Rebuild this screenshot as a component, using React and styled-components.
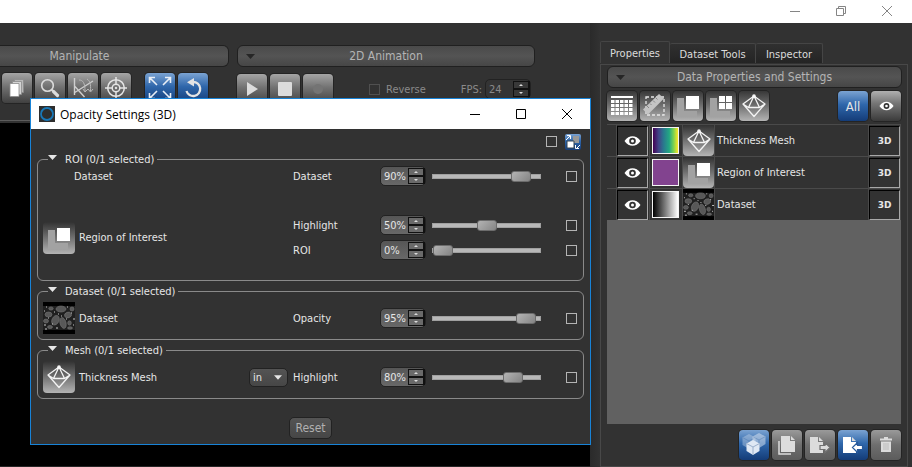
import React from 'react';
import styled, { createGlobalStyle, css } from 'styled-components';

const Global = createGlobalStyle`
  * { box-sizing: border-box; }
  html, body { margin: 0; background: #323232; }
  body, button, input, select {
    font-family: "DejaVu Sans Condensed", "DejaVu Sans", sans-serif;
    font-size: 11px;
    color: #e6e6e6;
  }
  button { padding: 0; border: 0; cursor: default; }
`;

const Shell = styled.div`
  height: 100vh;
  display: flex;
  flex-direction: column;
  overflow: hidden;
  background: #323232;
`;
const MainTitle = styled.header`
  flex: none;
  height: 23px;
  background: #fff;
  display: flex;
  justify-content: flex-end;
  align-items: center;
  gap: 30px;
  padding: 0 17px 2px 0;
`;
const WinButton = styled.button`
  width: 16px;
  height: 16px;
  background: none;
  display: grid;
  place-items: center;
  color: ${(p) => (p.$dim ? '#858585' : '#000')};
`;
const Columns = styled.div`
  flex: 1;
  min-height: 0;
  display: flex;
`;
const Workspace = styled.main`
  flex: 1;
  min-width: 0;
  display: flex;
  flex-direction: column;
`;
const Toolbar = styled.div`
  display: flex;
  gap: 8px;
  padding: 22px 0 16px;
  border-bottom: 1px solid #5c5c5c;
  margin-bottom: 2px;
`;
const Group = styled.section`
  flex: ${(p) => p.$size};
`;
const Bar = styled.h2`
  margin: 0;
  height: 22px;
  display: flex;
  align-items: center;
  justify-content: center;
  font-size: 12px;
  font-weight: 400;
  color: #b4b4b4;
  background: linear-gradient(#4a4a4a, #545454 50%, #464646);
  border: 1px solid #202020;
  border-radius: 6px;
  ${(p) => p.$clipped && css`
    padding-right: 69px;
    border-left: 0;
    border-radius: 0 6px 6px 0;
  `}
`;
const BarToggle = styled.button`
  width: 24px;
  height: 20px;
  background: none;
  display: grid;
  place-items: center;
  margin-right: -24px;
`;
const BarText = styled.span`
  flex: 1;
  text-align: center;
`;
const Tools = styled.div`
  display: flex;
  align-items: center;
  gap: 3px;
  padding: ${(p) => p.$pad || '0'};
`;
const Spacer = styled.span`
  width: ${(p) => (p.$w ? p.$w + 'px' : 'auto')};
  flex: ${(p) => (p.$w ? 'none' : '1')};
`;
const fills = {
  grey: 'linear-gradient(#a5a5a5, #727272 45%, #404040)',
  rise: 'linear-gradient(#383838, #6b6b6b 45%, #b4b4b4)',
  flat: 'linear-gradient(#9a9a9a, #6e6e6e 50%, #5c5c5c)',
  eye: 'linear-gradient(#b0b0b0, #777 40%, #3a3a3a)',
  blue: 'linear-gradient(#7ba3d2, #2f67ab 45%, #143c78)',
};
const IconButton = styled.button`
  width: 30px;
  height: 30px;
  flex: none;
  border-radius: 4px;
  background: ${(p) => fills[p.$fill]};
  box-shadow: 0 0 0 1px #242424;
  display: grid;
  place-items: center;
  font-size: 13px;
`;
const MutedLabel = styled.label`
  display: flex;
  align-items: center;
  gap: 6px;
  color: #8a8a8a;
`;
const Check = styled.input.attrs({ type: 'checkbox' })`
  appearance: none;
  width: 11px;
  height: 11px;
  margin: 0;
  border: 1px solid ${(p) => (p.$dim ? '#505050' : '#b4b4b4')};
  &:checked { background: #b4b4b4; }
`;
const Canvas = styled.div`
  flex: 1;
  background: #000;
  border-bottom: 1px solid #262626;
`;

const SpinBox = styled.span`
  display: flex;
  align-items: center;
  width: 46px;
  height: 20px;
  border: 1px solid #222;
  border-radius: 5px;
  background: ${(p) => (p.$dim ? '#343434' : 'linear-gradient(#565656, #686868)')};
`;
const SpinInput = styled.input`
  flex: 1;
  min-width: 0;
  width: 0;
  height: 18px;
  padding: 1px 0 0 3px;
  border: 0;
  background: none;
  outline: none;
  color: ${(p) => (p.$dim ? '#8a8a8a' : '#e6e6e6')};
`;
const SpinButtons = styled.span`
  display: flex;
  flex-direction: column;
  width: 17px;
`;
const SpinButton = styled.button`
  height: 8px;
  display: grid;
  place-items: center;
  border: 1px solid #111;
  border-right-width: 2px;
  background: ${(p) => (p.$dim ? '#383838' : '#6a6a6a')};
`;

const Side = styled.aside`
  width: 322px;
  flex: none;
  display: flex;
  flex-direction: column;
  padding: 18px 4px 0 10px;
  background: linear-gradient(90deg, #2a2a2a, #323232 10px);
`;
const Tabs = styled.div`
  display: flex;
  align-items: flex-end;
  height: 22px;
`;
const Tab = styled.button`
  height: ${(p) => (p.$on ? 22 : 20)}px;
  width: ${(p) => p.$w}px;
  padding-top: ${(p) => (p.$on ? 1 : 2)}px;
  border: 1px solid #454545;
  border-width: 1px 1px 0 ${(p) => (p.$on ? 1 : 0)}px;
  border-radius: 2px 2px 0 0;
  background: ${(p) => (p.$on ? '#323232' : 'linear-gradient(#303030, #242424)')};
  color: #dcdcdc;
`;
const SidePanel = styled.div`
  flex: 1;
  min-height: 0;
  display: flex;
  flex-direction: column;
  margin-top: 1px;
  padding: 1px 5px 6px 6px;
  border: 1px solid #484848;
  gap: 3px;
`;
const List = styled.div`
  flex: 1;
  background: #616161;
  margin: 0 1px 3px 0;
`;
const Table = styled.table`
  width: 100%;
  table-layout: fixed;
  border-collapse: separate;
  border-spacing: 0;
  background: #323232;
`;
const Cell = styled.td`
  width: ${(p) => (p.$w ? p.$w + 'px' : 'auto')};
  height: 32px;
  padding: ${(p) => p.$pad || '0'};
  border-top: 1px solid #4a4a4a;
  border-right: 1px solid #4a4a4a;
  vertical-align: middle;
  svg { display: block; }
`;
const CellButton = styled.button`
  width: 31px;
  height: 30px;
  display: grid;
  place-items: center;
  background: #323232;
  border: 1px solid #000;
  border-right-color: #a8a8a8;
  border-bottom-color: #a8a8a8;
  font: bold 9px "DejaVu Sans", sans-serif;
  color: #e6e6e6;
`;
const Swatch = styled.span`
  display: block;
  width: 27px;
  height: 27px;
  border: 1px solid #f4f4f4;
  background: ${(p) => p.$fill};
`;
const Tile = styled.span`
  display: grid;
  place-items: center;
  width: ${(p) => p.$size}px;
  height: ${(p) => p.$size}px;
  border-radius: 4px;
  background: linear-gradient(#323232, #6b6b6b 45%, #b4b4b4);
`;

const Dialog = styled.section`
  position: absolute;
  left: 30px;
  top: 98px;
  width: 561px;
  border: 1px solid #1883d7;
  background: #323232;
`;
const DialogTitle = styled.header`
  height: 30px;
  background: #fff;
  display: flex;
  align-items: center;
  padding: 0 15px 0 8px;
  gap: 30px;
`;
const TitleText = styled.h1`
  flex: 1;
  display: flex;
  align-items: center;
  gap: 5px;
  margin: 0;
  font: 400 12px "Open Sans", sans-serif;
  color: #000;
`;
const DialogBody = styled.div`
  padding: 5px 6px;
  display: flex;
  flex-direction: column;
  gap: 3px;
`;
const SelectAll = styled.div`
  display: flex;
  justify-content: flex-end;
  align-items: center;
  gap: 8px;
  height: 15px;
  padding-right: 3px;
`;
const SmallBlue = styled.button`
  width: 16px;
  height: 16px;
  border-radius: 2px;
  background: ${fills.blue};
`;
const Box = styled.fieldset`
  margin: 0;
  min-width: 0;
  border: 1px solid #8a8a8a;
  border-radius: 6px;
  padding: ${(p) => p.$pad};
  display: block;
`;
const Legend = styled.legend`
  display: flex;
  align-items: flex-start;
  gap: 8px;
  height: 14px;
  margin-left: 5px;
  padding: 0 3px 0 0;
  line-height: 15px;
  svg { margin-top: 3px; }
`;
const Rows = styled.div`
  display: grid;
  grid-template-columns: 1fr 39px 82px 46px 110px 31px;
  grid-template-rows: ${(p) => p.$rows};
  column-gap: 5px;
  align-items: center;
`;
const Name = styled.div`
  grid-column: 1 / span ${(p) => (p.$wide ? 1 : 2)};
  grid-row: ${(p) => p.$row};
  display: flex;
  align-items: center;
  gap: 4px;
  padding-left: ${(p) => (p.$indent ? '31px' : '0')};
`;
const Field = styled.label`
  grid-column: 3;
`;
const RowSlot = styled.div`
  display: contents;
  & > * { grid-row: ${(p) => p.$row}; }
`;
const Slider = styled.input.attrs({ type: 'range' })`
  appearance: none;
  width: 109px;
  height: 12px;
  margin: 0;
  justify-self: end;
  background: none;
  &::-webkit-slider-runnable-track {
    height: 5px;
    background: #b8b8b8;
    border: 1px solid #a0a0a0;
  }
  &::-webkit-slider-thumb {
    appearance: none;
    width: 20px;
    height: 11px;
    margin-top: -4px;
    border: 1px solid #6c6c6c;
    border-radius: 3px;
    background: linear-gradient(135deg, #b4b4b4, #848484);
  }
`;
const EndCheck = styled(Check)`
  justify-self: end;
`;
const SelectWrap = styled.span`
  display: grid;
  align-items: center;
  grid-template-columns: 1fr 14px;
  svg { grid-area: 1 / 2; pointer-events: none; }
`;
const Select = styled.select`
  grid-area: 1 / 1 / 2 / 3;
  appearance: none;
  width: 39px;
  height: 19px;
  padding: 0 0 0 3px;
  border: 1px solid #222;
  border-radius: 5px;
  background: linear-gradient(#545454, #464646);
`;
const Reset = styled.button`
  align-self: center;
  width: 43px;
  height: 22px;
  margin: 15px 0 0;
  border: 1px solid #222;
  border-radius: 5px;
  background: linear-gradient(#545454, #464646);
  color: #b0b0b0;
  font-size: 12px;
`;

const Arrow = ({ color = '#e6e6e6', w = 9 }) => (
  <svg width={w} height="5" viewBox="0 0 9 5"><path d="M0 0h9L4.5 5z" fill={color} /></svg>
);
const Eye = ({ s = 17 }) => (
  <svg width={s} height="12" viewBox="0 0 17 12">
    <path d="M0.5 6C3 2.500 5.500 1.300 8.500 1.300S14 2.500 16.500 6C14 9.500 11.500 10.700 8.500 10.700S3 9.500 .5 6z" fill="#fff" />
    <circle cx="8.500" cy="6" r="3.300" fill="#333" /><circle cx="8.500" cy="6" r="1.500" fill="#fff" />
  </svg>
);
const Mesh = () => (
  <svg width="26" height="24" viewBox="0 0 26 24" fill="none" stroke="#f4f4f4" strokeWidth="1.300" strokeLinejoin="round">
    <path d="M13 2L24 10 13 22.500 2 10zM2 10L7.500 13.500H18.500L24 10M13 2L7.500 13.500M13 2L18.500 13.500" />
    <circle cx="13" cy="2.200" r="1.200" fill="#fff" />
  </svg>
);
const Roi = () => (
  <svg width="24" height="24" viewBox="0 0 24 24">
    <path d="M1 4h7v13h13v6H1z" fill="#a2a2a2" /><path d="M10 2h13v13H10z" fill="#fff" />
  </svg>
);
const MultiRoi = () => (
  <svg width="24" height="24" viewBox="0 0 24 24">
    <path d="M1 4h7v13h13v6H1z" fill="#a2a2a2" />
    <path d="M10 2h6v6h-6zM17 2h6v6h-6zM10 9h6v6h-6zM17 9h6v6h-6z" fill="#fff" />
  </svg>
);
const Calendar = () => (
  <svg width="22" height="20" viewBox="0 0 22 20" fill="#fff">
    <path d="M0 0h22v2H0z" />
    {[4, 8, 12, 16].map((y) => [0, 4.5, 9, 13.5, 18].map((x) => <rect key={x + '-' + y} x={x} y={y} width="3.500" height="3" />))}
  </svg>
);
const Ruler = () => (
  <svg width="24" height="24" viewBox="0 0 24 24">
    <path d="M3 3h18v18H3z" fill="none" stroke="#e6e6e6" strokeWidth="1.300" strokeDasharray="3 2" />
    <path d="M0 15.500L16 0l5 4.500L5 20.500z" fill="#c4c4c4" />
    <path d="M4 12l2 2M7 9.500l1.500 1.500M10 6.500l2 2M13 4l1.500 1.500" stroke="#888" />
  </svg>
);
const Pages = () => (
  <svg width="16" height="20" viewBox="0 0 16 20" stroke="#8c8c8c" strokeWidth=".8">
    <path d="M5.500 1.500h9v13h-9z" fill="#b8b8b8" /><path d="M3.500 3.500h9v13h-9z" fill="#d4d4d4" /><path d="M1 5.500h9v13H1z" fill="#fff" />
  </svg>
);
const Magnifier = () => (
  <svg width="20" height="20" viewBox="0 0 20 20" fill="none" stroke="#dcdcdc">
    <circle cx="7.500" cy="7.500" r="5.800" strokeWidth="1.600" /><path d="M11.500 11.500l2 2" strokeWidth="2" /><path d="M13.500 13.500l4 4" strokeWidth="3.200" strokeLinecap="round" />
  </svg>
);
const Axes = () => (
  <svg width="24" height="24" viewBox="0 0 24 24" fill="none" stroke="#cfcfcf" strokeWidth="1.400">
    <path d="M3.500 2v17M3 17L22 5M3.500 10l10 11" />
    <path d="M8 4c4 0 6 3 6 11M16 3c3 2 4 5 3.500 12M12 13l2 3 3-3M17 13l2.500 3 2.500-3" strokeWidth="1" stroke="#b8b8b8" />
  </svg>
);
const Target = () => (
  <svg width="24" height="24" viewBox="0 0 24 24" fill="none" stroke="#e4e4e4" strokeWidth="1.500">
    <circle cx="12" cy="12" r="8.300" /><circle cx="12" cy="12" r="3.800" />
    <path d="M12 1v8M12 15v8M1 12h8M15 12h8" /><circle cx="12" cy="12" r=".5" />
  </svg>
);
const Expand = () => (
  <svg width="24" height="24" viewBox="0 0 24 24" fill="none" stroke="#e8eef6" strokeWidth="1.600">
    <path d="M9 9L2 2M1.500 7V1.500H7M15 9l7-7M17 1.500h5.500V7M9 15l-7 7M1.500 17v5.500H7M15 15l7 7M17 22.500h5.500V17" />
  </svg>
);
const Rotate = () => (
  <svg width="20" height="22" viewBox="0 0 20 22">
    <path d="M10 5A7 7 0 1 1 3.500 14" fill="none" stroke="#e4e4e4" strokeWidth="2.300" /><path d="M11 1v8.500L4 5.200z" fill="#e4e4e4" />
  </svg>
);
const Play = () => <svg width="14" height="16"><path d="M2 1l11 7-11 7z" fill="#dcdcdc" /></svg>;
const Stop = () => <svg width="14" height="14"><rect width="14" height="14" rx="1" fill="#dcdcdc" /></svg>;
const Record = () => <svg width="12" height="12"><circle cx="6" cy="6" r="5" fill="#747474" /></svg>;
const Cube = ({ x, y, o }) => (
  <g transform={`translate(${x} ${y})`} opacity={o}>
    <path d="M7 0l6.500 3.500V11L7 15 .5 11V3.500z" fill="#dfe8f4" /><path d="M.5 3.500L7 7l6.500-3.500M7 7v8" stroke="#9bb0cc" fill="none" />
  </g>
);
const Cubes = () => (
  <svg width="24" height="24" viewBox="0 0 24 24"><Cube x={0} y={1} o={0.35} /><Cube x={10} y={0} o={0.5} /><Cube x={4} y={7} o={1} /></svg>
);
const Copy = () => (
  <svg width="20" height="20" viewBox="0 0 20 20">
    <path d="M2 6v13h12" fill="none" stroke="#dcdcdc" strokeWidth="1.500" /><path d="M4 1h9v5h5v11H4z" fill="#dcdcdc" /><path d="M14 1l4 4h-4z" fill="#dcdcdc" />
  </svg>
);
const Transfer = ({ inward }) => (
  <svg width="22" height="20" viewBox="0 0 22 20">
    <path d="M1 2h8v5h5v11H1z" fill={inward ? '#fff' : '#dcdcdc'} /><path d="M10 2l4 4h-4z" fill="#dcdcdc" />
    <path d={inward ? 'M10.500 12.500l5-5v3h5v4h-5v3z' : 'M21 12.500l-5-5v3h-5v4h5v3z'} fill={inward ? '#fff' : '#dcdcdc'} stroke={inward ? '#285a9b' : '#707070'} strokeWidth="1.200" />
  </svg>
);
const Trash = () => (
  <svg width="14" height="16" viewBox="0 0 14 16" fill="#dcdcdc">
    <path d="M5 0h4v1.500h4v2H1v-2h4zM2 4.500h10V15H2z" /><path d="M5 6v7M7 6v7M9 6v7" stroke="#bbb" />
  </svg>
);
const Scan = ({ s = 32 }) => (
  <svg width={s} height={s} viewBox="0 0 32 32">
    <path d="M0 0h32v32H0z" fill="#000" /><path d="M0 4h32v24H0z" fill="#202020" />
    <g fill="#585858" stroke="#747474" strokeWidth=".6">
      <ellipse cx="18" cy="7" rx="5" ry="3" /><ellipse cx="25" cy="13" rx="3.500" ry="2.800" transform="rotate(-20 25 13)" />
      <ellipse cx="12.500" cy="18" rx="3.500" ry="5" transform="rotate(25 12 18)" /><ellipse cx="20" cy="21" rx="3" ry="5.500" transform="rotate(-15 20 21)" />
      <ellipse cx="5.500" cy="12.500" rx="3.500" ry="2.500" /><ellipse cx="3" cy="19" rx="2.500" ry="2" /><ellipse cx="26.500" cy="21" rx="1.800" ry="2.200" />
      <ellipse cx="8" cy="6.500" rx="2.200" ry="1.600" /><ellipse cx="29" cy="7" rx="2" ry="2" /><ellipse cx="7" cy="25" rx="2.500" ry="1.500" /><ellipse cx="27" cy="26" rx="2.500" ry="1.200" />
    </g>
    <path d="M1 9h1M11 10h1M15 12h1M30 17h2M1 23h2M13 26h2M23 17h1M9 22h1M28 11h1M3 5h1M24 5h1M5 16h1M30 23h1M2 27h2M18 14h1" stroke="#c4c4c4" />
  </svg>
);
const Minimize = () => <svg width="12" height="12"><path d="M1 6.500h10" stroke="currentColor" /></svg>;
const Maximize = () => <svg width="12" height="12"><path d="M1.500 1.500h9v9h-9z" fill="none" stroke="currentColor" /></svg>;
const Restore = () => <svg width="12" height="12"><path d="M1.500 3.500h7v7h-7zM3.500 3V1.500h7v7H9" fill="none" stroke="currentColor" /></svg>;
const Close = () => <svg width="12" height="12"><path d="M1 1l10 10M11 1L1 11" stroke="currentColor" /></svg>;

function Spin({ id, value, dim }) {
  return (
    <SpinBox $dim={dim}>
      <SpinInput id={id} defaultValue={value} $dim={dim} />
      <SpinButtons>
        <SpinButton $dim={dim} aria-label="Increase"><svg width="4" height="2"><path d="M0 2l2-2 2 2z" fill="#ddd" /></svg></SpinButton>
        <SpinButton $dim={dim} aria-label="Decrease"><svg width="4" height="2"><path d="M0 0h4L2 2z" fill="#ddd" /></svg></SpinButton>
      </SpinButtons>
    </SpinBox>
  );
}

function Control({ id, label, value }) {
  return (
    <>
      <Field htmlFor={id}>{label}</Field>
      <Spin id={id} value={value + '%'} />
      <Slider aria-label={label + ' level'} defaultValue={value} />
      <EndCheck aria-label={'Select ' + label} />
    </>
  );
}

const items = [
  { name: 'Thickness Mesh', fill: 'linear-gradient(90deg,#440154,#414487 22%,#2a788e 42%,#22a884 65%,#7ad151 82%,#fde725)', icon: <Tile $size={31}><Mesh /></Tile> },
  { name: 'Region of Interest', fill: '#82438f', icon: <Tile $size={31}><Roi /></Tile> },
  { name: 'Dataset', fill: 'linear-gradient(90deg,#000,#fff)', icon: <Scan s={31} /> },
];

export default function App() {
  return (
    <Shell>
      <Global />
      <MainTitle>
        <WinButton $dim aria-label="Minimize"><Minimize /></WinButton>
        <WinButton $dim aria-label="Restore"><Restore /></WinButton>
        <WinButton $dim aria-label="Close"><Close /></WinButton>
      </MainTitle>
      <Columns>
        <Workspace>
          <Toolbar>
            <Group $size="0 0 229px">
              <Bar $clipped><BarText>Manipulate</BarText></Bar>
              <Tools $pad="6px 0 0 2px">
                <IconButton $fill="grey" aria-label="Pages"><Pages /></IconButton>
                <IconButton $fill="grey" aria-label="Zoom"><Magnifier /></IconButton>
                <IconButton $fill="grey" aria-label="Axes"><Axes /></IconButton>
                <IconButton $fill="grey" aria-label="Center"><Target /></IconButton>
                <Spacer $w={8} />
                <IconButton $fill="blue" aria-label="Fit"><Expand /></IconButton>
                <IconButton $fill="blue" aria-label="Rotate"><Rotate /></IconButton>
              </Tools>
            </Group>
            <Group $size="0 0 298px">
              <Bar><BarToggle aria-label="Collapse 2D Animation"><Arrow color="#262626" /></BarToggle><BarText>2D Animation</BarText></Bar>
              <Tools $pad="7px 4px 0 0">
                <IconButton $fill="grey" aria-label="Play"><Play /></IconButton>
                <IconButton $fill="grey" aria-label="Stop"><Stop /></IconButton>
                <IconButton $fill="grey" aria-label="Record"><Record /></IconButton>
                <Spacer $w={30} />
                <MutedLabel><Check $dim />Reverse</MutedLabel>
                <Spacer />
                <MutedLabel htmlFor="fps">FPS:</MutedLabel>
                <Spin id="fps" value="24" dim />
              </Tools>
            </Group>
          </Toolbar>
          <Canvas />
        </Workspace>
        <Side>
          <Tabs role="tablist">
            <Tab role="tab" aria-selected="true" $on $w={70}>Properties</Tab>
            <Tab role="tab" $w={86}>Dataset Tools</Tab>
            <Tab role="tab" $w={67}>Inspector</Tab>
          </Tabs>
          <SidePanel>
            <Bar><BarToggle aria-label="Collapse settings"><Arrow color="#262626" /></BarToggle><BarText>Data Properties and Settings</BarText></Bar>
            <Tools $pad="0 1px 0 0">
              <IconButton $fill="rise" aria-label="Table"><Calendar /></IconButton>
              <IconButton $fill="rise" aria-label="Annotations"><Ruler /></IconButton>
              <IconButton $fill="rise" aria-label="Regions"><Roi /></IconButton>
              <IconButton $fill="rise" aria-label="Multiple regions"><MultiRoi /></IconButton>
              <IconButton $fill="rise" aria-label="Meshes"><Mesh /></IconButton>
              <Spacer />
              <IconButton $fill="blue">All</IconButton>
              <IconButton $fill="eye" aria-label="Visible"><Eye s={15} /></IconButton>
            </Tools>
            <List>
              <Table>
                <tbody>
                  {items.map((it) => (
                    <tr key={it.name}>
                      <Cell $w={10} />
                      <Cell $w={33}><CellButton aria-label={'Show ' + it.name}><Eye /></CellButton></Cell>
                      <Cell $w={33} $pad="0 0 0 2px"><Swatch $fill={it.fill} /></Cell>
                      <Cell $w={32}>{it.icon}</Cell>
                      <Cell $pad="0 0 0 2px">{it.name}</Cell>
                      <Cell $w={32}><CellButton>3D</CellButton></Cell>
                    </tr>
                  ))}
                </tbody>
              </Table>
            </List>
            <Tools $pad="0 1px 0 0">
              <Spacer />
              <IconButton $fill="blue" aria-label="Objects"><Cubes /></IconButton>
              <IconButton $fill="flat" aria-label="Duplicate"><Copy /></IconButton>
              <IconButton $fill="flat" aria-label="Export"><Transfer /></IconButton>
              <IconButton $fill="blue" aria-label="Import"><Transfer inward /></IconButton>
              <IconButton $fill="flat" aria-label="Delete"><Trash /></IconButton>
            </Tools>
          </SidePanel>
        </Side>
      </Columns>

      <Dialog role="dialog" aria-labelledby="dialog-title">
        <DialogTitle>
          <TitleText id="dialog-title">
            <svg width="16" height="16"><path d="M0 0h16v16H0z" fill="#2e2e2e" /><circle cx="8" cy="8" r="6" fill="none" stroke="#1878b8" strokeWidth="1.800" /></svg>
            Opacity Settings (3D)
          </TitleText>
          <WinButton aria-label="Minimize"><Minimize /></WinButton>
          <WinButton aria-label="Maximize"><Maximize /></WinButton>
          <WinButton aria-label="Close"><Close /></WinButton>
        </DialogTitle>
        <DialogBody>
          <SelectAll>
            <Check aria-label="Select all" />
            <SmallBlue aria-label="Toggle region view">
              <svg width="16" height="16"><path d="M8 2h6v7H8z" fill="#999" /><path d="M2 7h7v7H2z" fill="#fff" stroke="#345" /><path d="M1 6l4-4M2 1.500h3.500V5M15 11l-4 4M10.500 11v3.500H14" stroke="#fff" fill="none" /></svg>
            </SmallBlue>
          </SelectAll>
          <Box $pad="0 6px 20px 5px">
            <Legend><Arrow />ROI (0/1 selected)</Legend>
            <Rows $rows="20px 29px 20px 5px 20px">
              <Name $row="1" $indent>Dataset</Name>
              <Control id="roi-dataset" label="Dataset" value={90} />
              <Name $row="3 / span 3"><Tile $size={32}><Roi /></Tile>Region of Interest</Name>
              <RowSlot $row={3}><Control id="roi-highlight" label="Highlight" value={50} /></RowSlot>
              <RowSlot $row={5}><Control id="roi-roi" label="ROI" value={0} /></RowSlot>
            </Rows>
          </Box>
          <Box $pad="4px 6px 5px 5px">
            <Legend><Arrow />Dataset (0/1 selected)</Legend>
            <Rows $rows="32px">
              <Name $row="1"><Scan />Dataset</Name>
              <Control id="dataset-opacity" label="Opacity" value={95} />
            </Rows>
          </Box>
          <Box $pad="4px 6px 5px 5px">
            <Legend><Arrow />Mesh (0/1 selected)</Legend>
            <Rows $rows="32px">
              <Name $row="1" $wide><Tile $size={32}><Mesh /></Tile>Thickness Mesh</Name>
              <SelectWrap>
                <Select aria-label="Units" defaultValue="in"><option>in</option><option>mm</option></Select>
                <Arrow w={8} />
              </SelectWrap>
              <Control id="mesh-highlight" label="Highlight" value={80} />
            </Rows>
          </Box>
          <Reset>Reset</Reset>
        </DialogBody>
      </Dialog>
    </Shell>
  );
}
